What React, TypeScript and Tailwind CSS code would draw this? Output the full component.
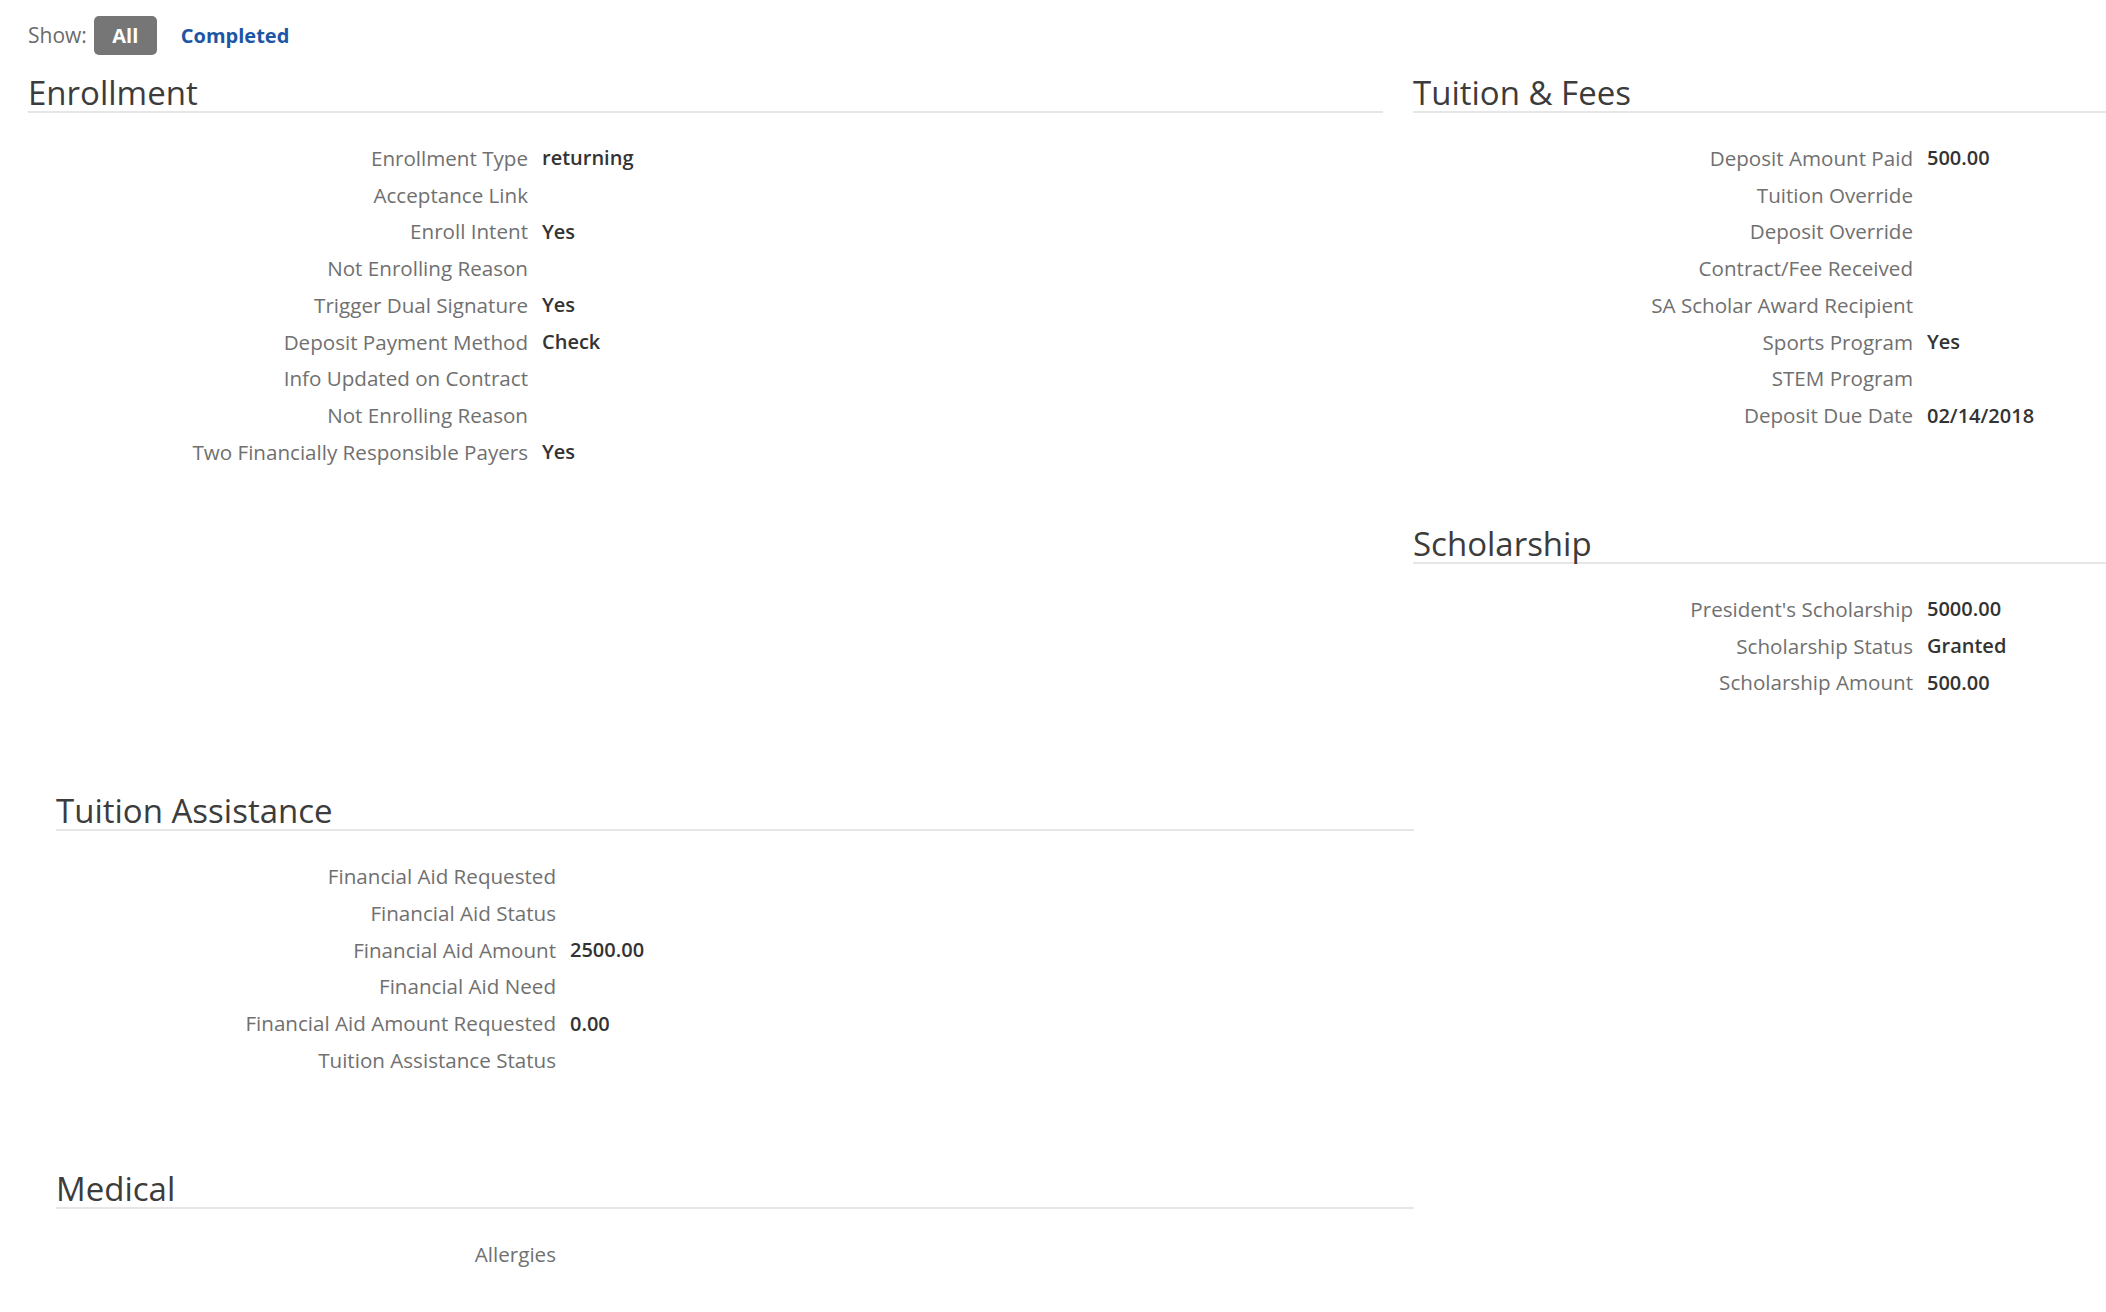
import { useState } from "react"

interface Field {
    label: string;
    value?: string;
}

const enrollment: Field[] = [
    { label: "Enrollment Type", value: "returning" },
    { label: "Acceptance Link" },
    { label: "Enroll Intent", value: "Yes" },
    { label: "Not Enrolling Reason" },
    { label: "Trigger Dual Signature", value: "Yes" },
    { label: "Deposit Payment Method", value: "Check" },
    { label: "Info Updated on Contract" },
    { label: "Not Enrolling Reason" },
    { label: "Two Financially Responsible Payers", value: "Yes" },
];

const tuitionFees: Field[] = [
    { label: "Deposit Amount Paid", value: "500.00" },
    { label: "Tuition Override" },
    { label: "Deposit Override" },
    { label: "Contract/Fee Received" },
    { label: "SA Scholar Award Recipient" },
    { label: "Sports Program", value: "Yes" },
    { label: "STEM Program" },
    { label: "Deposit Due Date", value: "02/14/2018" },
];

const scholarship: Field[] = [
    { label: "President's Scholarship", value: "5000.00" },
    { label: "Scholarship Status", value: "Granted" },
    { label: "Scholarship Amount", value: "500.00" },
];

const tuitionAssistance: Field[] = [
    { label: "Financial Aid Requested" },
    { label: "Financial Aid Status" },
    { label: "Financial Aid Amount", value: "2500.00" },
    { label: "Financial Aid Need" },
    { label: "Financial Aid Amount Requested", value: "0.00" },
    { label: "Tuition Assistance Status" },
];

const medical: Field[] = [{ label: "Allergies" }];

function Section({ title, fields }: { title: string; fields: Field[] }) {
    return (
        <section className="mb-[92px]">
            <h2 className="text-[33px] leading-[36px] text-[#3c3c3c] border-b-2 border-[#e6e6e6]">{title}</h2>
            <dl className="mt-[27px]">
                {fields.map((f, i) => (
                    <div key={i} className="flex h-[36.75px] items-center">
                        <dt className="w-[500px] shrink-0 text-right text-[20.6px] text-[#707070]">{f.label}</dt>
                        <dd className="pl-[14px] text-[20px] font-semibold text-[#333333]">{f.value}</dd>
                    </div>
                ))}
            </dl>
        </section>
    )
}

export default function App() {
    const [filter, setFilter] = useState<"all" | "completed">("all");

    return (
        <div className="min-h-screen bg-white pl-[28px] pt-[16px] overflow-hidden" style={{ fontFamily: "'Open Sans', 'Noto Sans', sans-serif" }}>
            <div className="flex h-[39px] items-center">
                <span className="text-[21px] text-[#6b6b6b] mr-[7px]">Show:</span>
                <button
                    className={`h-[39px] w-[63px] rounded-[5px] text-[20px] font-bold ${filter === "all" ? "bg-[#767676] text-white" : "text-[#1d56a5]"}`}
                    onClick={() => setFilter("all")}
                >
                    All
                </button>
                <button
                    className={`h-[39px] px-[24px] rounded-[5px] text-[20px] font-bold ${filter === "completed" ? "bg-[#767676] text-white" : "text-[#1d56a5]"}`}
                    onClick={() => setFilter("completed")}
                >
                    Completed
                </button>
            </div>

            <div className="mt-[20px] grid grid-cols-[1355px_1fr] gap-x-[30px]">
                <div>
                    <Section title="Enrollment" fields={enrollment} />
                </div>
                <div>
                    <Section title="Tuition & Fees" fields={tuitionFees} />
                    <Section title="Scholarship" fields={scholarship} />
                </div>
            </div>

            <div className="ml-[28px] w-[1358px]">
                <Section title="Tuition Assistance" fields={tuitionAssistance} />
                <Section title="Medical" fields={medical} />
            </div>
        </div>
    )
}
